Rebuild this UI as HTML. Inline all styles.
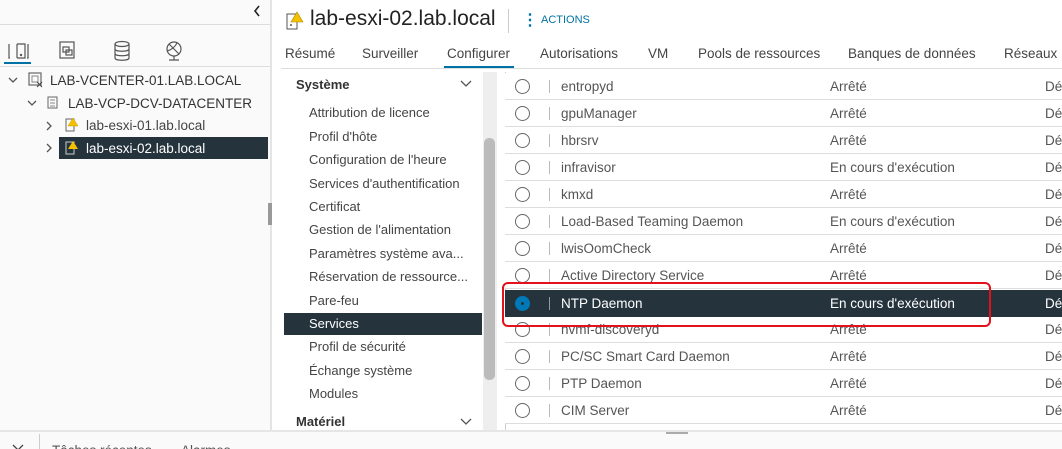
<!DOCTYPE html>
<html><head><meta charset="utf-8"><style>
*{margin:0;padding:0;box-sizing:border-box}
html,body{width:1062px;height:449px;overflow:hidden}
body{background:#fafafa;font-family:"Liberation Sans",sans-serif;color:#333;position:relative;font-size:13px}
.a{position:absolute;white-space:nowrap}
.row{position:absolute;left:505px;width:557px;height:27px;border-bottom:1px solid #ddd;background:#fff}
.row .r{position:absolute;left:10px;top:6px;width:15px;height:15px;border:1.5px solid #666;border-radius:50%}
.row .s{position:absolute;left:44px;top:7px;width:1px;height:13px;background:#bbb}
.row .n{position:absolute;left:56px;top:6px;color:#555;font-size:13.5px}
.row .st{position:absolute;left:325px;top:6px;color:#555;font-size:13.5px}
.row .d{position:absolute;left:540px;top:6px;color:#555;font-size:13.5px}
.nav{position:absolute;left:309px;color:#444;font-size:13px}
.tab{position:absolute;top:46px;color:#444;font-size:13.5px}
</style></head><body>
<div class="a" style="left:0;top:0;width:270px;height:430px;background:#fafafa"></div>
<svg class="a" style="left:252px;top:4px" width="10" height="14"><path d="M7 2L3 7l4 5" stroke="#222" stroke-width="1.6" fill="none"/></svg>
<div class="a" style="left:0;top:24px;width:270px;height:1px;background:#ddd"></div>
<svg class="a" style="left:4px;top:38px" width="190" height="26" viewBox="0 0 190 26">
<g fill="none" stroke="#555" stroke-width="1.2">
<path d="M5 6v14h1M13 6v14M13 6h8v14h-8M24 6v14h-1"/><circle cx="17" cy="17" r=".6"/>
<rect x="56" y="4" width="14" height="16"/><rect x="59" y="9" width="6" height="5"/><rect x="62" y="12" width="6" height="5"/>
<ellipse cx="118" cy="6" rx="7" ry="2.5"/><path d="M111 6v14c0 3 14 3 14 0V6M111 11c0 3 14 3 14 0M111 15.5c0 3 14 3 14 0"/>
<circle cx="170" cy="11" r="7"/><path d="M165 6l10 10M163 13c4-1 8-4 10-8M170 18v4M165 22h10"/>
</g></svg>
<div class="a" style="left:4px;top:62px;width:27px;height:2px;background:#0072a3"></div>
<div class="a" style="left:0;top:66px;width:270px;height:1px;background:#ddd"></div>
<svg class="a" style="left:8px;top:76px" width="10" height="8"><path d="M1 2l4 4 4-4" stroke="#555" stroke-width="1.3" fill="none"/></svg>
<svg class="a" style="left:28px;top:72px" width="16" height="16"><rect x="1" y="1" width="12" height="12" fill="none" stroke="#666" stroke-width="1.2"/><rect x="4" y="4" width="6" height="6" fill="none" stroke="#888"/><path d="M9 10l5 5M14 10l-5 5" stroke="#444"/></svg>
<div class="a" style="left:50px;top:73px;font-size:13.5px;color:#333">LAB-VCENTER-01.LAB.LOCAL</div>
<svg class="a" style="left:27px;top:99px" width="10" height="8"><path d="M1 2l4 4 4-4" stroke="#555" stroke-width="1.3" fill="none"/></svg>
<svg class="a" style="left:47px;top:96px" width="12" height="14"><rect x="1" y="1" width="9" height="11" fill="none" stroke="#666"/><path d="M3 4h5M3 7h5M3 10h5" stroke="#888"/></svg>
<div class="a" style="left:68px;top:96px;color:#333;font-size:13.5px">LAB-VCP-DCV-DATACENTER</div>
<svg class="a" style="left:45px;top:121px" width="8" height="10"><path d="M2 1l4 4-4 4" stroke="#555" stroke-width="1.3" fill="none"/></svg>
<svg class="a" style="left:65px;top:117px" width="14" height="16"><rect x="1" y="2" width="8" height="12" fill="none" stroke="#666"/><path d="M8 1l5 8h-10z" fill="#f5c000" stroke="#c90" stroke-width=".5"/></svg>
<div class="a" style="left:86px;top:118px;color:#444;font-size:13.5px">lab-esxi-01.lab.local</div>
<div class="a" style="left:59px;top:137px;width:209px;height:22px;background:#25333d"></div>
<svg class="a" style="left:45px;top:143px" width="8" height="10"><path d="M2 1l4 4-4 4" stroke="#555" stroke-width="1.3" fill="none"/></svg>
<svg class="a" style="left:65px;top:140px" width="14" height="16"><rect x="1" y="2" width="8" height="12" fill="none" stroke="#ccc"/><path d="M8 1l5 8h-10z" fill="#f5c000"/></svg>
<div class="a" style="left:86px;top:141px;color:#fff;font-size:13.5px">lab-esxi-02.lab.local</div>
<div class="a" style="left:270px;top:0;width:2px;height:430px;background:#e4e4e4"></div>
<div class="a" style="left:268px;top:203px;width:4px;height:22px;background:#999"></div>
<div class="a" style="left:272px;top:0;width:790px;height:430px;background:#fff"></div>
<svg class="a" style="left:286px;top:11px" width="18" height="20"><rect x="1" y="3" width="10" height="15" fill="none" stroke="#555"/><circle cx="5" cy="14" r="1" fill="#555"/><path d="M11 1l6 10h-12z" fill="#f5c000" stroke="#a80" stroke-width=".6"/></svg>
<div class="a" style="left:310px;top:7px;font-size:21px;color:#222">lab-esxi-02.lab.local</div>
<div class="a" style="left:508px;top:9px;width:1px;height:24px;background:#ccc"></div>
<div class="a" style="left:522px;top:10px;font-size:16px;color:#0072a3;font-weight:bold">&#8942;</div>
<div class="a" style="left:541px;top:14px;font-size:11px;color:#0072a3">ACTIONS</div>
<div class="tab" style="left:285px">Résumé</div>
<div class="tab" style="left:362px">Surveiller</div>
<div class="tab" style="left:447px">Configurer</div>
<div class="tab" style="left:540px">Autorisations</div>
<div class="tab" style="left:648px">VM</div>
<div class="tab" style="left:698px">Pools de ressources</div>
<div class="tab" style="left:848px">Banques de données</div>
<div class="tab" style="left:1004px">Réseaux</div>
<div class="a" style="left:281px;top:68px;width:781px;height:1px;background:#ddd"></div>
<div class="a" style="left:444px;top:66px;width:70px;height:2px;background:#0072a3"></div>
<div class="a" style="left:296px;top:77px;font-weight:bold;color:#333">Système</div>
<svg class="a" style="left:460px;top:80px" width="12" height="8"><path d="M1 1l5 5 5-5" stroke="#555" stroke-width="1.3" fill="none"/></svg>
<div class="nav" style="top:105px">Attribution de licence</div>
<div class="nav" style="top:129px">Profil d'hôte</div>
<div class="nav" style="top:152px">Configuration de l'heure</div>
<div class="nav" style="top:176px">Services d'authentification</div>
<div class="nav" style="top:199px">Certificat</div>
<div class="nav" style="top:222px">Gestion de l'alimentation</div>
<div class="nav" style="top:246px">Paramètres système ava...</div>
<div class="nav" style="top:269px">Réservation de ressource...</div>
<div class="nav" style="top:293px">Pare-feu</div>
<div class="a" style="left:284px;top:313px;width:198px;height:22px;background:#25333d"></div>
<div class="nav" style="top:316px;color:#fff">Services</div>
<div class="nav" style="top:339px">Profil de sécurité</div>
<div class="nav" style="top:363px">Échange système</div>
<div class="nav" style="top:386px">Modules</div>
<div class="a" style="left:296px;top:414px;font-weight:bold;color:#333">Matériel</div>
<svg class="a" style="left:460px;top:418px" width="12" height="8"><path d="M1 1l5 5 5-5" stroke="#555" stroke-width="1.3" fill="none"/></svg>
<div class="a" style="left:483px;top:72px;width:14px;height:358px;background:#eee"></div>
<div class="a" style="left:484px;top:138px;width:11px;height:242px;background:#bbb;border-radius:5px"></div>
<div class="a" style="left:505px;top:72px;width:1px;height:358px;background:#ccc"></div>
<div class="row" style="top:73px"><div class="r"></div><div class="s"></div><div class="n">entropyd</div><div class="st">Arrêté</div><div class="d">Dé</div></div>
<div class="row" style="top:100px"><div class="r"></div><div class="s"></div><div class="n">gpuManager</div><div class="st">Arrêté</div><div class="d">Dé</div></div>
<div class="row" style="top:127px"><div class="r"></div><div class="s"></div><div class="n">hbrsrv</div><div class="st">Arrêté</div><div class="d">Dé</div></div>
<div class="row" style="top:154px"><div class="r"></div><div class="s"></div><div class="n">infravisor</div><div class="st">En cours d'exécution</div><div class="d">Dé</div></div>
<div class="row" style="top:181px"><div class="r"></div><div class="s"></div><div class="n">kmxd</div><div class="st">Arrêté</div><div class="d">Dé</div></div>
<div class="row" style="top:208px"><div class="r"></div><div class="s"></div><div class="n">Load-Based Teaming Daemon</div><div class="st">En cours d'exécution</div><div class="d">Dé</div></div>
<div class="row" style="top:235px"><div class="r"></div><div class="s"></div><div class="n">lwisOomCheck</div><div class="st">Arrêté</div><div class="d">Dé</div></div>
<div class="row" style="top:262px"><div class="r"></div><div class="s"></div><div class="n">Active Directory Service</div><div class="st">Arrêté</div><div class="d">Dé</div></div>
<div class="row" style="top:316px"><div class="r"></div><div class="s"></div><div class="n">nvmf-discoveryd</div><div class="st">Arrêté</div><div class="d">Dé</div></div>
<div class="row" style="top:343px"><div class="r"></div><div class="s"></div><div class="n">PC/SC Smart Card Daemon</div><div class="st">Arrêté</div><div class="d">Dé</div></div>
<div class="row" style="top:370px"><div class="r"></div><div class="s"></div><div class="n">PTP Daemon</div><div class="st">Arrêté</div><div class="d">Dé</div></div>
<div class="row" style="top:397px"><div class="r"></div><div class="s"></div><div class="n">CIM Server</div><div class="st">Arrêté</div><div class="d">Dé</div></div>
<div class="row" style="top:290px;height:27px;background:#25333d;border:none">
<div class="a" style="left:10px;top:6px;width:15px;height:15px;border-radius:50%;background:#0079b8"></div>
<div class="a" style="left:16px;top:12px;width:3px;height:3px;border-radius:50%;background:#25333d"></div>
<div class="s" style="background:#999"></div><div class="n" style="color:#fff">NTP Daemon</div><div class="st" style="color:#fff">En cours d'exécution</div><div class="d" style="color:#fff">Dé</div></div>
<div class="a" style="left:502px;top:282px;width:489px;height:45px;border:2px solid #e4101a;border-radius:6px"></div>
<div class="a" style="left:0;top:430px;width:1062px;height:19px;background:#fafafa;border-top:2px solid #e6e6e6"></div>
<div class="a" style="left:666px;top:432px;width:22px;height:2px;background:#aaa"></div>
<svg class="a" style="left:12px;top:444px" width="12" height="8"><path d="M1 1l5 5 5-5" stroke="#444" stroke-width="1.3" fill="none"/></svg>
<div class="a" style="left:39px;top:434px;width:1px;height:15px;background:#ccc"></div>
<div class="a" style="left:52px;top:443px;color:#555;font-size:13.5px">Tâches récentes</div>
<div class="a" style="left:181px;top:443px;color:#555;font-size:13.5px">Alarmes</div>
</body></html>
